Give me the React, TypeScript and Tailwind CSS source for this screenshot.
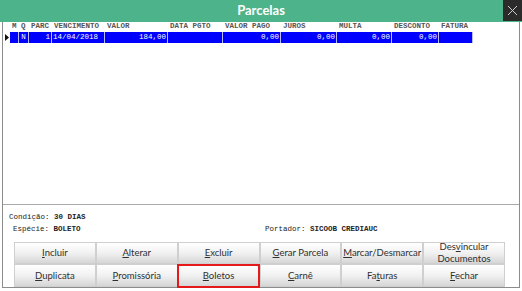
import React from 'react';

type Col = { label: string; w: string; value: string; align: 'left' | 'right' | 'center' };

const cols: Col[] = [
  { label: 'M', w: 'w-[9px]', value: '', align: 'center' },
  { label: 'Q', w: 'w-[10px]', value: 'N', align: 'center' },
  { label: 'PARC', w: 'w-[23px]', value: '1', align: 'right' },
  { label: 'VENCIMENTO', w: 'w-[53px]', value: '14/04/2018', align: 'left' },
  { label: 'VALOR', w: 'w-[63px]', value: '184,00', align: 'right' },
  { label: 'DATA PGTO', w: 'w-[55px]', value: '', align: 'left' },
  { label: 'VALOR PAGO', w: 'w-[58px]', value: '0,00', align: 'right' },
  { label: 'JUROS', w: 'w-[56px]', value: '0,00', align: 'right' },
  { label: 'MULTA', w: 'w-[55px]', value: '0,00', align: 'right' },
  { label: 'DESCONTO', w: 'w-[47px]', value: '0,00', align: 'right' },
  { label: 'FATURA', w: 'w-[34px]', value: '', align: 'left' },
];

const alignCls = { left: 'text-left', right: 'text-right', center: 'text-center' };

function Btn({ children, boxed }: { children: React.ReactNode; boxed?: boolean }) {
  return (
    <div className="relative flex items-center justify-center text-center leading-[12px] border border-[#cfcfcf] bg-gradient-to-b from-white via-[#f1f1f1] to-[#d6d6d6] text-[#2f2f2f]">
      {children}
      {boxed && <div className="absolute -left-[2px] -top-[1px] -right-[1px] -bottom-[2px] border-[2.5px] border-[#e3191b]" />}
    </div>
  );
}

export default function App() {
  return (
    <div className="w-[522px] h-[291px] bg-white overflow-hidden flex flex-col">
      <div className="h-[22px] flex bg-[#4db38b]">
        <div className="flex-1 flex items-center justify-center pl-[19px] text-white font-bold text-[13px] font-['Lato',sans-serif]">
          Parcelas
        </div>
        <div className="w-[19px] h-[21px] bg-[#2b2b2b] flex items-center justify-center">
          <svg width="11" height="11" viewBox="0 0 11 11">
            <path d="M1 1 L10 10 M10 1 L1 10" stroke="#cfcfcf" strokeWidth="1" />
          </svg>
        </div>
      </div>

      <div className="h-[266px] mx-[2px] border-x border-b border-[#8c8c8c] flex flex-col font-['Liberation_Mono',monospace] text-[7.5px]">
        <div className="h-[183px] border-b border-[#a9a9a9]">
          <div className="flex h-[10px] items-center text-[#555] font-bold">
            <div className="w-[7px]" />
            {cols.map((c) => (
              <div key={c.label} className={`${c.w} pl-[2px] whitespace-nowrap overflow-hidden`}>
                {c.label}
              </div>
            ))}
          </div>
          <div className="flex h-[11px] items-center">
            <div className="w-[7px] flex items-center justify-center">
              <svg width="4" height="7" viewBox="0 0 4 7">
                <path d="M0 0 L4 3.5 L0 7 Z" fill="#111" />
              </svg>
            </div>
            {cols.map((c) => (
              <div
                key={c.label}
                className={`${c.w} ${alignCls[c.align]} h-full bg-[#0000ff] text-white border-r border-[#b9bcff] px-[1px] leading-[11px] whitespace-nowrap`}
              >
                {c.value}
              </div>
            ))}
          </div>
        </div>

        <div className="flex-1 flex flex-col pt-[6px] text-[#222]">
          <div className="pl-[6px] h-[12px] leading-[12px]">
            Condição: <span className="font-bold">30 DIAS</span>
          </div>
          <div className="flex h-[12px] leading-[12px]">
            <div className="pl-[10px] w-[262px]">
              Espécie: <span className="font-bold">BOLETO</span>
            </div>
            <div>
              Portador: <span className="font-bold">SICOOB CREDIAUC</span>
            </div>
          </div>
          <div className="mt-[7px] ml-[11px] w-[491px] grid grid-cols-6 grid-rows-[22px_23px] font-['Lato',sans-serif] text-[9.5px]">
            <Btn><span><u>I</u>ncluir</span></Btn>
            <Btn><span><u>A</u>lterar</span></Btn>
            <Btn><span><u>E</u>xcluir</span></Btn>
            <Btn><span><u>G</u>erar Parcela</span></Btn>
            <Btn><span><u>M</u>arcar/Desmarcar</span></Btn>
            <Btn><span>Des<u>v</u>incular<br />Documentos</span></Btn>
            <Btn><span><u>D</u>uplicata</span></Btn>
            <Btn><span><u>P</u>romissória</span></Btn>
            <Btn boxed><span><u>B</u>oletos</span></Btn>
            <Btn><span><u>C</u>arnê</span></Btn>
            <Btn><span>Fa<u>t</u>uras</span></Btn>
            <Btn><span><u>F</u>echar</span></Btn>
          </div>
        </div>
      </div>
    </div>
  );
}
